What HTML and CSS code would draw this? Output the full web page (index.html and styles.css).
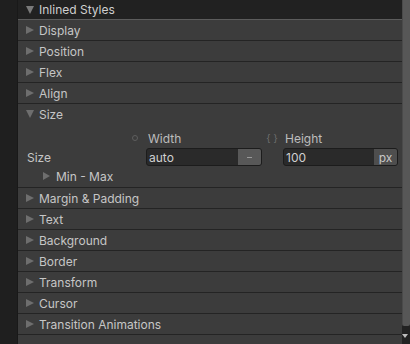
FILE: index.html
```html
<!DOCTYPE html>
<html lang="en">
  <head>
    <meta charset="UTF-8" />
    <meta name="viewport" content="width=device-width, initial-scale=1.0" />
    <title>Inlined Styles</title>
    <link rel="stylesheet" href="styles.css">
  </head>
  <body>
    <div class="inspector">
      <div class="panel">
        <div class="header">
          <span class="arrow-down"></span>
          <span>Inlined Styles</span>
        </div>

        <div class="row"><span class="arrow-right"></span><span>Display</span></div>
        <div class="row"><span class="arrow-right"></span><span>Position</span></div>
        <div class="row"><span class="arrow-right"></span><span>Flex</span></div>
        <div class="row"><span class="arrow-right"></span><span>Align</span></div>

        <div class="section">
          <div class="section-title"><span class="arrow-down dim"></span><span>Size</span></div>
          <div class="size-body">
            <div class="size-grid">
              <div></div>
              <div class="field-head"><span class="field-icon"><span class="dot"></span></span><span>Width</span></div>
              <div class="field-head second"><span class="field-icon braces">{ }</span><span>Height</span></div>

              <div class="size-label">Size</div>
              <div class="input">
                <span class="value">auto</span>
                <span class="unit dash"><span class="minus"></span></span>
              </div>
              <div class="input second">
                <span class="value">100</span>
                <span class="unit">px</span>
              </div>
            </div>
            <div class="minmax"><span class="arrow-right"></span><span>Min - Max</span></div>
          </div>
        </div>

        <div class="row"><span class="arrow-right"></span><span>Margin &amp; Padding</span></div>
        <div class="row"><span class="arrow-right"></span><span>Text</span></div>
        <div class="row"><span class="arrow-right"></span><span>Background</span></div>
        <div class="row"><span class="arrow-right"></span><span>Border</span></div>
        <div class="row"><span class="arrow-right"></span><span>Transform</span></div>
        <div class="row"><span class="arrow-right"></span><span>Cursor</span></div>
        <div class="row"><span class="arrow-right"></span><span>Transition Animations</span></div>
        <div class="row empty"></div>
      </div>

      <div class="scrollbar">
        <div class="thumb"></div>
        <div class="scroll-end"><span class="scroll-arrow"></span></div>
      </div>
    </div>
  </body>
</html>
```

FILE: styles.css
```css
body {
    margin: 0;
    background-color: #1f1f1f;
    font-family: Inter, "Noto Sans", sans-serif;
    font-size: 12px;
    color: #c6c6c6;
    height: 344px;
    overflow: hidden;
}
.inspector {
    display: flex;
    margin-left: 17px;
    height: 344px;
}
.panel {
    flex: 1;
    background-color: #3c3c3c;
    border-left: 1px solid #191919;
    overflow: hidden;
}
.header {
    display: flex;
    align-items: center;
    height: 19px;
    background-color: #212121;
    border-bottom: 1px solid #5c5c5c;
    padding-left: 8px;
    color: #cfcfcf;
}
.row,
.section-title {
    display: flex;
    align-items: center;
    height: 20px;
    padding-left: 8px;
    border-bottom: 1px solid #242424;
}
.section-title {
    border-bottom: none;
}
.section {
    border-bottom: 1px solid #242424;
}
.arrow-right {
    width: 0;
    height: 0;
    border-top: 4px solid transparent;
    border-bottom: 4px solid transparent;
    border-left: 8px solid #6e6e6e;
    margin-right: 5px;
}
.arrow-down {
    width: 0;
    height: 0;
    border-left: 4px solid transparent;
    border-right: 4px solid transparent;
    border-top: 8px solid #7a7a7a;
    margin-right: 5px;
}
.arrow-down.dim {
    border-top-color: #6e6e6e;
}
.size-body {
    height: 63px;
    box-sizing: border-box;
    padding-top: 6px;
}
.size-grid {
    display: grid;
    grid-template-columns: 128px 116px 136px;
    grid-template-rows: 16px 18px;
    row-gap: 2px;
}
.second {
    margin-left: 21px;
}
.field-head {
    display: flex;
    align-items: center;
    margin-left: -22px;
    color: #bdbdbd;
}
.field-head.second {
    margin-left: -1px;
}
.field-icon {
    width: 22px;
    display: flex;
    justify-content: center;
    margin-right: 2px;
    color: #6f6f6f;
    font-size: 10px;
}
.dot {
    width: 4px;
    height: 4px;
    border: 1px solid #5e5e5e;
    border-radius: 50%;
}
.size-label {
    display: flex;
    align-items: center;
    padding-left: 9px;
}
.input {
    display: flex;
    background-color: #2a2a2a;
    border: 1px solid #1c1c1c;
    border-radius: 3px;
    overflow: hidden;
}
.value {
    flex: 1;
    display: flex;
    align-items: center;
    padding-left: 2px;
    color: #d0d0d0;
}
.unit {
    width: 23px;
    display: flex;
    align-items: center;
    justify-content: center;
    background-color: #4e4e4e;
    color: #c8c8c8;
}
.unit.dash {
    background-color: #585858;
}
.minus {
    width: 5px;
    height: 1px;
    background-color: #9a9a9a;
}
.minmax {
    display: flex;
    align-items: center;
    height: 16px;
    margin-top: 2px;
    padding-left: 25px;
}
.minmax .arrow-right {
    border-left-width: 7px;
    margin-right: 6px;
}
.scrollbar {
    width: 8px;
    display: flex;
    flex-direction: column;
    background-color: #222;
}
.thumb {
    height: 326px;
    background-color: #575757;
    border-left: 1px solid #4a4a4a;
    border-radius: 0 0 2px 2px;
}
.scroll-end {
    flex: 1;
    padding-top: 8px;
}
.scroll-arrow {
    display: block;
    width: 0;
    height: 0;
    border-left: 3px solid transparent;
    border-right: 3px solid transparent;
    border-top: 4px solid #bdbdbd;
}
```
